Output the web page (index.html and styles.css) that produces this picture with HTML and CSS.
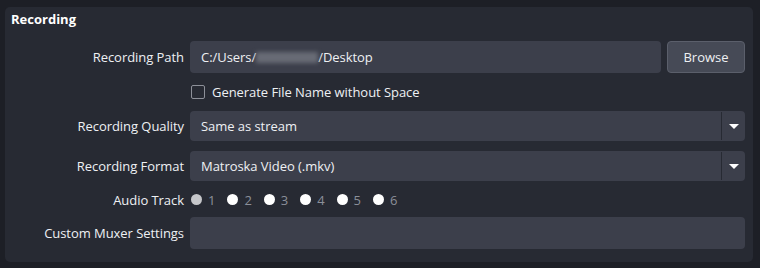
FILE: index.html
```html
<!DOCTYPE html>
<html lang="en">
<head>
  <meta charset="UTF-8" />
  <title>Recording</title>
  <link rel="stylesheet" href="styles.css">
</head>
<body>
  <div class="panel">
    <h2 class="panel-title">Recording</h2>
    <div class="form">
      <div class="row">
        <label class="label">Recording Path</label>
        <div class="field path-field">
          <div class="input">C:/Users/<span class="blurred"></span>/Desktop</div>
          <button class="btn">Browse</button>
        </div>
      </div>
      <div class="row row-check">
        <span></span>
        <label class="check"><span class="box"></span>Generate File Name without Space</label>
      </div>
      <div class="row row-quality">
        <label class="label">Recording Quality</label>
        <div class="combo">
          <span class="combo-text">Same as stream</span>
          <span class="combo-arrow"></span>
        </div>
      </div>
      <div class="row">
        <label class="label">Recording Format</label>
        <div class="combo">
          <span class="combo-text">Matroska Video (.mkv)</span>
          <span class="combo-arrow"></span>
        </div>
      </div>
      <div class="row row-tracks">
        <label class="label">Audio Track</label>
        <div class="tracks">
          <span class="track"><span class="dot dot-off"></span>1</span>
          <span class="track"><span class="dot"></span>2</span>
          <span class="track"><span class="dot"></span>3</span>
          <span class="track"><span class="dot"></span>4</span>
          <span class="track"><span class="dot"></span>5</span>
          <span class="track"><span class="dot"></span>6</span>
        </div>
      </div>
      <div class="row">
        <label class="label">Custom Muxer Settings</label>
        <div class="input"></div>
      </div>
    </div>
  </div>
</body>
</html>
```

FILE: styles.css
```css
body {
  margin: 0;
  background: #1d1f26;
  font-family: 'Open Sans', sans-serif;
  font-size: 13px;
  letter-spacing: -0.05px;
  color: #eef0f3;
}
.panel {
  margin: 7px 0 0 5px;
  width: 748px;
  height: 255px;
  box-sizing: border-box;
  padding: 2px 8px 0 6px;
  background: #272a33;
  border-radius: 5px;
}
.panel-title {
  margin: 0 0 12px;
  font-size: 13px;
  font-weight: 700;
  line-height: 20px;
  letter-spacing: 0;
  color: #fff;
}
.form {
  display: flex;
  flex-direction: column;
  gap: 6px;
}
.row {
  display: grid;
  grid-template-columns: 173px 1fr;
  column-gap: 6px;
  align-items: center;
}
.label {
  text-align: right;
  line-height: 18px;
}
.path-field {
  display: flex;
  gap: 6px;
}
.path-field .input {
  flex: 1;
}
.input {
  height: 32px;
  box-sizing: border-box;
  padding: 0 11px;
  background: #3c3f4b;
  border-radius: 4px;
  display: flex;
  align-items: center;
}
.blurred {
  display: inline-block;
  width: 62px;
  height: 11px;
  margin-top: 1px;
  background: #686b75;
  filter: blur(2px);
}
.btn {
  width: 78px;
  height: 32px;
  background: #464a56;
  border: 1px solid #5b5f6b;
  border-radius: 4px;
  color: #eef0f3;
  font-family: inherit;
  font-size: 13px;
}
.row-check {
  height: 26px;
}
.check {
  display: flex;
  align-items: center;
  gap: 7px;
  padding-left: 1px;
}
.box {
  width: 14px;
  height: 14px;
  box-sizing: border-box;
  border: 1px solid #8d9099;
  border-radius: 2px;
}
.row-quality {
  margin-bottom: 4px;
}
.combo {
  height: 30px;
  display: flex;
  background: #3c3f4b;
  border-radius: 4px;
}
.combo-text {
  flex: 1;
  padding-left: 11px;
  display: flex;
  align-items: center;
}
.combo-arrow {
  width: 23px;
  margin: 1px 0;
  border-left: 1px solid #272a33;
  position: relative;
}
.combo-arrow::after {
  content: "";
  position: absolute;
  left: 7px;
  top: 12px;
  border-left: 5px solid transparent;
  border-right: 5px solid transparent;
  border-top: 5px solid #fff;
}
.row-tracks {
  height: 23px;
  padding-top: 1px;
}
.tracks {
  display: flex;
  gap: 12px;
  padding-left: 1px;
}
.track {
  display: flex;
  align-items: center;
  gap: 6px;
  color: #8b8f99;
}
.dot {
  width: 11px;
  height: 11px;
  border-radius: 50%;
  background: #fff;
}
.dot-off {
  background: #c6c7ca;
}
```
